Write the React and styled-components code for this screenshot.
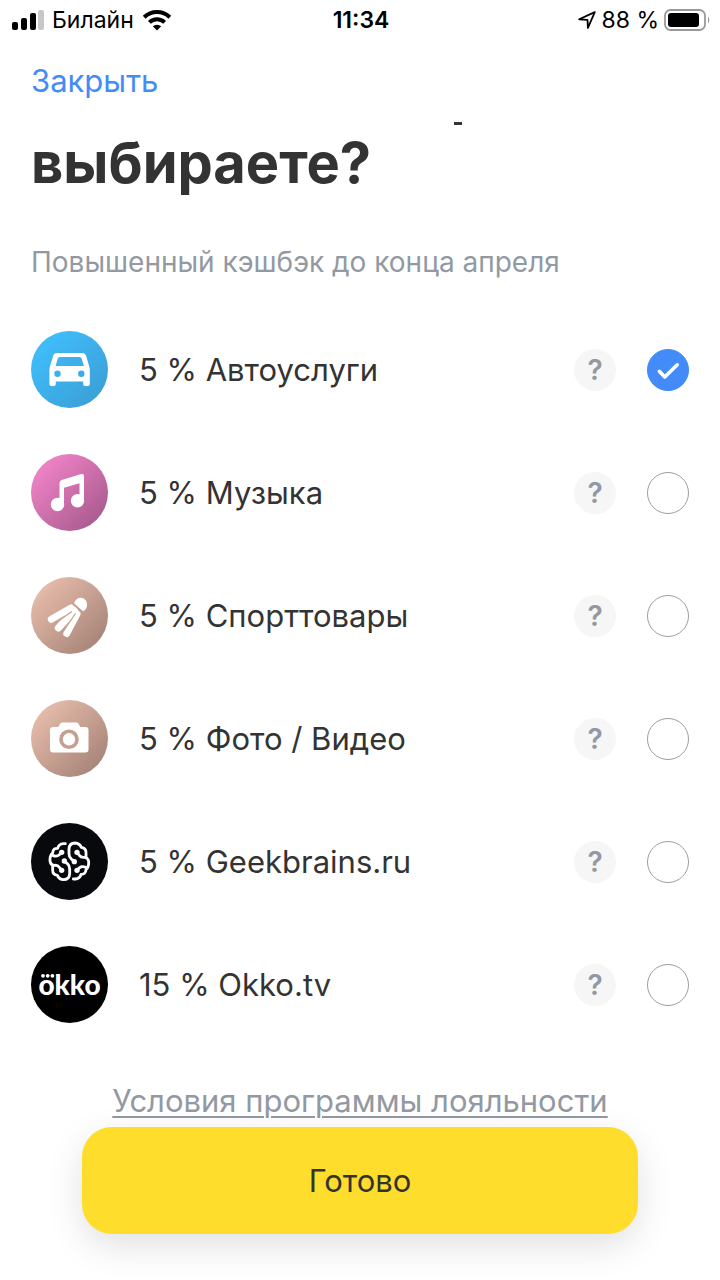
import React, { useState } from "react";
import styled, { createGlobalStyle } from "styled-components";

const GlobalStyle = createGlobalStyle`
  *, *::before, *::after { box-sizing: border-box; }
  body {
    margin: 0;
    background: #fff;
    color: #333;
    font-family: Inter, "Liberation Sans", sans-serif;
  }
  button { font: inherit; border: 0; padding: 0; cursor: pointer; }
`;

const Screen = styled.main`
  min-height: 100vh;
  display: flex;
  flex-direction: column;
`;

const StatusBar = styled.header`
  display: grid;
  grid-template-columns: 1fr auto 1fr;
  align-items: center;
  height: 40px;
  padding: 0 10px 0 12px;
  color: #000;
  font-size: 23px;
  line-height: 28px;
`;

const StatusGroup = styled.div`
  display: flex;
  align-items: center;
  justify-content: ${(p) => (p.$end ? "flex-end" : "flex-start")};
  gap: ${(p) => (p.$end ? 5 : 8)}px;
  white-space: nowrap;
`;

const Clock = styled.time`
  font-weight: 600;
`;

const NavBar = styled.nav`
  padding: 21px 31px 0;
`;

const CloseButton = styled.button`
  display: block;
  background: none;
  color: #428bf9;
  font-size: 31px;
  line-height: 40px;
`;

const ClippedLine = styled.div`
  display: flex;
  height: 28px;
  padding: 21px 0 0 63%;
`;

const Descender = styled.span`
  width: 8px;
  height: 3px;
  background: #333;
`;

const Title = styled.h1`
  margin: 0;
  padding: 0 31px;
  font-size: 56px;
  line-height: 68px;
  font-weight: 700;
`;

const Subtitle = styled.p`
  margin: 0;
  padding: 47px 31px 0;
  color: #9299a2;
  font-size: 28px;
  line-height: 36px;
`;

const List = styled.ul`
  list-style: none;
  margin: 0;
  padding: 51px 31px 0;
  display: flex;
  flex-direction: column;
  gap: 46px;
`;

const Row = styled.li`
  display: flex;
  align-items: center;
  height: 77px;
`;

const RowLabel = styled.label`
  flex: 1;
  display: flex;
  align-items: center;
  gap: 31px;
  font-size: 31px;
  line-height: 40px;
`;

const Badge = styled.span`
  display: block;
  width: 77px;
  height: 77px;
  border-radius: 50%;
  background: ${(p) => p.$fill};

  svg { display: block; }
`;

const HelpButton = styled.button`
  width: 42px;
  height: 42px;
  margin-right: 31px;
  border-radius: 50%;
  background: #f6f6f7;
  color: #9299a2;
  font-size: 28px;
  line-height: 42px;
  font-weight: 600;
`;

const CheckCell = styled.span`
  display: grid;

  > * { grid-area: 1 / 1; }
  svg { pointer-events: none; }
`;

const CheckInput = styled.input`
  appearance: none;
  width: 42px;
  height: 42px;
  margin: 0;
  border: 1px solid #9b9fa5;
  border-radius: 50%;
  cursor: pointer;

  &:checked { background: #428bf9; border-color: #428bf9; }
`;

const Footer = styled.footer`
  display: flex;
  flex-direction: column;
  align-items: center;
  padding: 58px 82px 46px;
`;

const TermsLink = styled.a`
  color: #9299a2;
  font-size: 31px;
  line-height: 40px;
  white-space: nowrap;
  text-decoration: underline;
  text-decoration-thickness: 2px;
  text-underline-offset: 4px;
`;

const DoneButton = styled.button`
  width: 100%;
  height: 107px;
  margin-top: 6px;
  border-radius: 30px;
  background: #ffdd2d;
  color: #333;
  font-size: 31px;
  box-shadow: 0 12px 36px rgba(0, 0, 0, 0.12);
`;

const SignalIcon = () => (
  <svg width="32" height="20" viewBox="0 0 32 20" aria-hidden="true">
    <rect x="0" y="12" width="6" height="8" rx="2" />
    <rect x="9" y="8" width="6" height="12" rx="2" />
    <rect x="18" y="3" width="6" height="17" rx="2" />
    <rect x="26" y="0" width="6" height="20" rx="2" fill="#c8c8c8" />
  </svg>
);

const WifiIcon = () => (
  <svg width="30" height="22" viewBox="0 0 30 22" fill="none" stroke="#000" strokeWidth="4" aria-hidden="true">
    <path d="M2.200 8.200a18.300 18.300 0 0 1 25.600 0" />
    <path d="M7.400 13.300a10.800 10.800 0 0 1 15.200 0" />
    <path d="M15 21.500l-4.200-4.200a6.200 6.200 0 0 1 8.400 0z" fill="#000" stroke="none" />
  </svg>
);

const LocationIcon = () => (
  <svg width="18" height="18" viewBox="0 0 18 18" fill="none" stroke="#000" strokeWidth="1.800" strokeLinejoin="round" aria-hidden="true">
    <path d="M16.800 1.100L1.200 8.300l8.300.6.400 8z" />
  </svg>
);

const BatteryIcon = () => (
  <svg width="46" height="22" viewBox="0 0 46 22" aria-hidden="true">
    <rect x="1" y="1" width="40" height="20" rx="5.500" fill="none" stroke="#999" strokeWidth="1.800" />
    <rect x="4" y="4" width="31" height="14" rx="3" />
    <path d="M44 7.500c1.600 1 1.600 6 0 7z" fill="#999" />
  </svg>
);

const CarIcon = () => (
  <svg width="77" height="77" viewBox="0 0 77 77" aria-hidden="true">
    <path
      fill="#fff"
      fillRule="evenodd"
      d="M26 22h25.500q2.800 0 3.600 2.700l3.200 11q.5 1.300.5 3v14.300q0 2-2 2h-2.600q-2 0-2-2v-2.500H24.800v2.500q0 2-2 2h-2.400q-2 0-2-2V38.700q0-1.700.5-3l3.300-11Q23 22 26 22zM29 26q-1.700 0-2.200 1.500L24.600 35h28.300l-2.200-7.500Q50.200 26 48.500 26zM26.500 39.500a3.200 3.200 0 1 0 0 6.400 3.200 3.200 0 1 0 0-6.400zM50.300 39.500a3.200 3.200 0 1 0 0 6.400 3.200 3.200 0 1 0 0-6.400z"
    />
  </svg>
);

const MusicIcon = () => (
  <svg width="77" height="77" viewBox="0 0 77 77" fill="#fff" aria-hidden="true">
    <circle cx="26.500" cy="50.500" r="6.700" />
    <circle cx="46.500" cy="46.800" r="6.700" />
    <path d="M28.500 50.500V29q0-2.200 2.200-3l19.500-5.900q2.800-.8 2.800 2v24.700h-4.500V29.200L33 33.800v16.700z" />
  </svg>
);

const ShuttlecockIcon = () => (
  <svg width="77" height="77" viewBox="0 0 77 77" aria-hidden="true">
    <g stroke="#fff" strokeLinecap="round" fill="none">
      <path d="M20.300 42.300L40 31" strokeWidth="7" />
      <path d="M27.300 51L43.500 33.500" strokeWidth="7" />
      <path d="M35.800 56.500L46 37" strokeWidth="7" />
    </g>
    <path d="M36 30l4.300-2.300 9 7.800-2.600 5z" fill="#fff" />
    <path d="M24.500 46L41 34.500M32.500 54L44.500 36.500" stroke="#c79f91" strokeWidth="1.300" fill="none" />
    <path d="M42.200 26.500l7.800 8" stroke="#c79f91" strokeWidth="1.600" fill="none" />
    <path d="M43 26.300c2.300-6.800 9.200-7 11.900-2.700 2.300 3.900 1 9.200-2.900 10.700z" fill="#fff" />
  </svg>
);

const CameraIcon = () => (
  <svg width="77" height="77" viewBox="0 0 77 77" aria-hidden="true">
    <path
      fill="#fff"
      d="M31.500 22.500h13.800q1.500 0 2.300 1.300L49.300 27h5.200q3 0 3 3v19.500q0 3-3 3H22q-3 0-3-3V30q0-3 3-3h5.300l1.800-3.200q.8-1.300 2.400-1.300z"
    />
    <circle cx="38" cy="39.300" r="8" fill="none" stroke="#c79f91" strokeWidth="3.600" />
  </svg>
);

const BrainHalf = () => (
  <>
    <path d="M136 86H130Q116 87 113 100Q99 99 98 114Q89 121 90 138Q92 151 104 151Q113 150 118 157L125 165" />
    <path d="M125 113L117 120Q110 126 98 121" />
    <path d="M133 138L142 146Q149 152 149 162V176Q148 194 131 194Q117 193 112 181Q98 179 98 166V152" />
    <g fill="#fff" stroke="none">
      <circle cx="125" cy="112" r="8" />
      <circle cx="125" cy="166" r="8" />
      <circle cx="133" cy="138" r="8" />
    </g>
  </>
);

const BrainIcon = () => (
  <svg width="77" height="77" viewBox="33 24 231 231" aria-hidden="true">
    <g fill="none" stroke="#fff" strokeWidth="8.500" strokeLinecap="round" strokeLinejoin="round">
      <BrainHalf />
      <g transform="rotate(180 148 139)">
        <BrainHalf />
      </g>
    </g>
  </svg>
);

const OkkoLogo = () => (
  <svg width="77" height="77" viewBox="0 0 77 77" fill="#fff" aria-hidden="true">
    <circle cx="12" cy="29.800" r="1.900" />
    <circle cx="16.700" cy="29.800" r="1.900" />
    <circle cx="21.400" cy="29.800" r="1.900" />
    <text x="38.500" y="49" textAnchor="middle" fontFamily="Lato, sans-serif" fontWeight="900" fontSize="28">okko</text>
  </svg>
);

const CATEGORIES = [
  { id: "auto", text: "5 % Автоуслуги", Icon: CarIcon, fill: "linear-gradient(135deg, #3fbbf8 20%, #3b9fd6 90%)" },
  { id: "music", text: "5 % Музыка", Icon: MusicIcon, fill: "linear-gradient(135deg, #ee82c6 15%, #a75a8d 90%)" },
  { id: "sport", text: "5 % Спорттовары", Icon: ShuttlecockIcon, fill: "linear-gradient(135deg, #e4baa9 15%, #a58377 90%)" },
  { id: "photo", text: "5 % Фото / Видео", Icon: CameraIcon, fill: "linear-gradient(135deg, #e4baa9 15%, #a58377 90%)" },
  { id: "geek", text: "5 % Geekbrains.ru", Icon: BrainIcon, fill: "#08090d" },
  { id: "okko", text: "15 % Okko.tv", Icon: OkkoLogo, fill: "#000" },
];

function CategoryRow({ id, text, Icon, fill, checked, onToggle }) {
  return (
    <Row>
      <RowLabel htmlFor={id}>
        <Badge $fill={fill}><Icon /></Badge>
        {text}
      </RowLabel>
      <HelpButton type="button">?</HelpButton>
      <CheckCell>
        <CheckInput type="checkbox" id={id} checked={checked} onChange={onToggle} />
        {checked && (
          <svg width="42" height="42" viewBox="0 0 42 42" fill="none" stroke="#fff" strokeWidth="3.600" strokeLinecap="round" strokeLinejoin="round" aria-hidden="true">
            <path d="M12.300 22.300l5.500 5.700 12.400-12.200" />
          </svg>
        )}
      </CheckCell>
    </Row>
  );
}

export default function App() {
  const [selected, setSelected] = useState(["auto"]);
  const toggle = (id) =>
    setSelected((ids) => (ids.includes(id) ? ids.filter((i) => i !== id) : [...ids, id]));

  return (
    <Screen>
      <GlobalStyle />
      <StatusBar>
        <StatusGroup>
          <SignalIcon />
          Билайн
          <WifiIcon />
        </StatusGroup>
        <Clock>11:34</Clock>
        <StatusGroup $end>
          <LocationIcon />
          88 %
          <BatteryIcon />
        </StatusGroup>
      </StatusBar>
      <NavBar>
        <CloseButton type="button">Закрыть</CloseButton>
      </NavBar>
      <ClippedLine aria-hidden="true"><Descender /></ClippedLine>
      <Title>выбираете?</Title>
      <Subtitle>Повышенный кэшбэк до конца апреля</Subtitle>
      <List>
        {CATEGORIES.map((c) => (
          <CategoryRow key={c.id} {...c} checked={selected.includes(c.id)} onToggle={() => toggle(c.id)} />
        ))}
      </List>
      <Footer>
        <TermsLink href="#terms">Условия программы лояльности</TermsLink>
        <DoneButton type="button">Готово</DoneButton>
      </Footer>
    </Screen>
  );
}
